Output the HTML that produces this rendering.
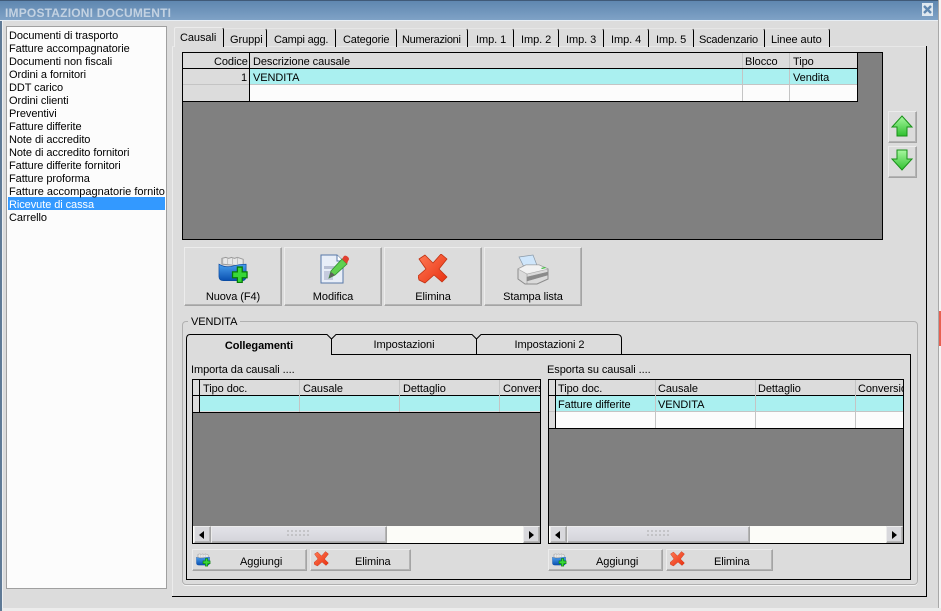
<!DOCTYPE html>
<html><head><meta charset="utf-8"><style>
html,body{margin:0;padding:0;width:941px;height:611px;overflow:hidden;background:#dcdcdc}
body{position:relative;font:11px/13px "Liberation Sans",sans-serif;color:#000}
div{position:absolute;box-sizing:border-box}
.t{white-space:nowrap;line-height:13px;letter-spacing:-.07px;margin-top:1px}
.b{background:#000}
.g{background:#c4c4c4}
.btn{background:#dcdcdc;border:1px solid;border-color:#ececec #a4a4a4 #a4a4a4 #ececec;box-shadow:inset -1px -1px 0 #b4b4b4}
.tab{top:28px;height:19px;border-top:1px solid #e6e6e6;border-right:1px solid #000;border-radius:0 3px 0 0}
.c{text-align:center}
svg{position:absolute;overflow:visible}
</style></head><body>
<svg width="0" height="0" style="position:absolute">
<defs>
<linearGradient id="bl" x1="0" y1="0" x2="0" y2="1"><stop offset="0" stop-color="#4aa0ee"/><stop offset="1" stop-color="#0a50b0"/></linearGradient>
<linearGradient id="gr" x1="0" y1="0" x2="0" y2="1"><stop offset="0" stop-color="#a8f8a0"/><stop offset="1" stop-color="#30c030"/></linearGradient>
<linearGradient id="rd" x1="0" y1="0" x2="1" y2="1"><stop offset="0" stop-color="#ff7a55"/><stop offset="1" stop-color="#e83010"/></linearGradient>
<symbol id="nuova" viewBox="0 0 32 28">
<path d="M4 9V3l4-1 3 1 3-1 3 1 3-1 3 1 3 1v7z" fill="#e8e8e8" stroke="#9a9a9a"/>
<path d="M5 2v7M10 2v7M15 2v7M20 2v7" stroke="#b0b0b0" stroke-width=".7"/>
<path d="M1 9q7 4 14 2t14-2l0 14q-1 3-4 3H6q-5 0-5-4z" fill="url(#bl)" stroke="#0a4aa0" stroke-width=".7"/>
<path d="M20 12h5v5h5v6h-5v5h-5v-5h-5v-6h5z" fill="#38d838" stroke="#087a08" stroke-width="1.3"/>
</symbol>
<symbol id="elim" viewBox="0 0 30 30">
<path d="M1 5l6-4 8 8 8-9 6 5-8 10 8 8-5 5-8-7-9 8-6-3-1-4 8-7z" fill="url(#rd)" stroke="#c03010" stroke-width=".8" stroke-linejoin="round"/>
</symbol>
</defs></svg>

<!-- outer edges -->
<div style="left:938px;top:0;width:3px;height:611px;background:#f4f4f4;border-left:1px solid #a8a8a8"></div>
<div style="left:939px;top:311px;width:2px;height:35px;background:#e86050"></div>
<div style="left:0;top:608px;width:941px;height:3px;background:#ececec"></div>
<div style="left:0;top:21px;width:2px;height:590px;background:#5f7a96"></div>
<div style="left:2px;top:21px;width:1px;height:587px;background:#eef0f2"></div>

<!-- title -->
<div style="left:0;top:0;width:938px;height:21px;background:linear-gradient(#5f87b0,#7fa2c6);border-top:1px solid #405a78;border-bottom:1px solid #e8eef4"></div>
<div class="t" style="left:5px;top:6px;font-weight:bold;font-size:12px;letter-spacing:.2px;color:#c3d2e2">IMPOSTAZIONI DOCUMENTI</div>
<div class="c" style="left:922px;top:3px;width:11px;height:13px;background:#dfe8f0"></div>
<svg style="left:922px;top:4px" width="11" height="11"><path d="M2 2l7 7M9 2l-7 7" stroke="#5f87b0" stroke-width="2.4"/></svg>

<!-- left list -->
<div style="left:6px;top:26px;width:161px;height:563px;background:#fcfcfc;border:1px solid #a0a0a0"></div>
<div style="left:8px;top:197px;width:157px;height:13px;background:#3399ff"></div>
<div class="t" style="left:9px;top:29px">Documenti di trasporto</div>
<div class="t" style="left:9px;top:42px">Fatture accompagnatorie</div>
<div class="t" style="left:9px;top:55px">Documenti non fiscali</div>
<div class="t" style="left:9px;top:68px">Ordini a fornitori</div>
<div class="t" style="left:9px;top:81px">DDT carico</div>
<div class="t" style="left:9px;top:94px">Ordini clienti</div>
<div class="t" style="left:9px;top:107px">Preventivi</div>
<div class="t" style="left:9px;top:120px">Fatture differite</div>
<div class="t" style="left:9px;top:133px">Note di accredito</div>
<div class="t" style="left:9px;top:146px">Note di accredito fornitori</div>
<div class="t" style="left:9px;top:159px">Fatture differite fornitori</div>
<div class="t" style="left:9px;top:172px">Fatture proforma</div>
<div class="t" style="left:9px;width:156px;overflow:hidden;top:185px;letter-spacing:0">Fatture accompagnatorie fornitori</div>
<div class="t" style="left:9px;top:198px;color:#fff">Ricevute di cassa</div>
<div class="t" style="left:9px;top:211px">Carrello</div>

<!-- main page frame -->
<div style="left:172px;top:46px;width:1px;height:551px;background:#ececec"></div>
<div style="left:172px;top:46px;width:755px;height:1px;background:#e8e8e8"></div>
<div class="b" style="left:926px;top:46px;width:1px;height:551px"></div>
<div class="b" style="left:172px;top:596px;width:755px;height:1px"></div>

<!-- top tabs -->
<div style="left:174px;top:27px;width:50px;height:20px;background:#dcdcdc;border-top:1px solid #ececec;border-left:1px solid #ececec;border-right:1px solid #000;border-radius:2px 3px 0 0"></div>
<div class="tab" style="left:224px;width:43px"></div>
<div class="tab" style="left:267px;width:69px"></div>
<div class="tab" style="left:336px;width:61px"></div>
<div class="tab" style="left:397px;width:71px"></div>
<div class="tab" style="left:468px;width:46px"></div>
<div class="tab" style="left:514px;width:45px"></div>
<div class="tab" style="left:559px;width:45px"></div>
<div class="tab" style="left:604px;width:45px"></div>
<div class="tab" style="left:649px;width:45px"></div>
<div class="tab" style="left:694px;width:71px"></div>
<div class="tab" style="left:765px;width:65px"></div>
<div class="t" style="left:180px;top:31px">Causali</div>
<div class="t" style="left:230px;top:33px">Gruppi</div>
<div class="t" style="left:274px;top:33px;letter-spacing:-.2px">Campi agg.</div>
<div class="t" style="left:343px;top:33px;letter-spacing:-.15px">Categorie</div>
<div class="t" style="left:402px;top:33px;letter-spacing:-.28px">Numerazioni</div>
<div class="t" style="left:476px;top:33px">Imp. 1</div>
<div class="t" style="left:521px;top:33px">Imp. 2</div>
<div class="t" style="left:566px;top:33px">Imp. 3</div>
<div class="t" style="left:611px;top:33px">Imp. 4</div>
<div class="t" style="left:656px;top:33px">Imp. 5</div>
<div class="t" style="left:699px;top:33px;letter-spacing:-.2px">Scadenzario</div>
<div class="t" style="left:771px;top:33px">Linee auto</div>

<!-- main grid -->
<div style="left:182px;top:52px;width:701px;height:188px;background:#808080;border:1px solid #000"></div>
<div style="left:183px;top:53px;width:674px;height:48px;background:#dcdcdc"></div>
<div style="left:250px;top:69px;width:607px;height:15px;background:#aaf0f0"></div>
<div style="left:250px;top:85px;width:607px;height:16px;background:#fcfcfc"></div>
<div class="g" style="left:183px;top:84px;width:674px;height:1px"></div>
<div class="g" style="left:742px;top:53px;width:1px;height:48px"></div>
<div class="g" style="left:789px;top:53px;width:1px;height:48px"></div>
<div class="b" style="left:183px;top:68px;width:675px;height:1px"></div>
<div class="b" style="left:183px;top:101px;width:675px;height:1px"></div>
<div class="b" style="left:249px;top:53px;width:1px;height:48px"></div>
<div class="b" style="left:857px;top:53px;width:1px;height:48px"></div>
<div class="t" style="left:214px;top:55px">Codice</div>
<div class="t" style="left:253px;top:55px">Descrizione causale</div>
<div class="t" style="left:745px;top:55px">Blocco</div>
<div class="t" style="left:793px;top:55px">Tipo</div>
<div class="t" style="left:241px;top:71px">1</div>
<div class="t" style="left:253px;top:71px">VENDITA</div>
<div class="t" style="left:793px;top:71px">Vendita</div>

<!-- arrows -->
<div class="btn" style="left:888px;top:111px;width:29px;height:32px"></div>
<div class="btn" style="left:888px;top:146px;width:29px;height:32px"></div>
<svg style="left:892px;top:116px" width="20" height="20"><path d="M10 0L20 11H15V20H5V11H0z" fill="url(#gr)" stroke="#189018"/></svg>
<svg style="left:892px;top:150px" width="20" height="20"><path d="M5 0H15V9H20L10 20L0 9H5z" fill="url(#gr)" stroke="#189018"/></svg>

<!-- action buttons -->
<div class="btn" style="left:184px;top:247px;width:98px;height:59px"></div>
<div class="btn" style="left:284px;top:247px;width:98px;height:59px"></div>
<div class="btn" style="left:384px;top:247px;width:98px;height:59px"></div>
<div class="btn" style="left:484px;top:247px;width:98px;height:59px"></div>
<svg style="left:218px;top:255px" width="31" height="28"><use href="#nuova" width="31" height="28"/></svg>
<svg style="left:320px;top:254px" width="30" height="30">
<path d="M1 1H17L23 7V29H1z" fill="#e8eef8" stroke="#5878a8"/>
<path d="M17 1V7H23" fill="#fff" stroke="#5878a8"/>
<rect x="4" y="12" width="16" height="3" fill="#b8c0d4"/><rect x="4" y="17" width="9" height="9" fill="#c4cade"/>
<path d="M9 24L11 17 22 5 27 10 15 21z" fill="#60d050" stroke="#309030" stroke-width=".8"/>
<path d="M22 5L24 2q2-1 4 1t0 4l-1 3z" fill="#e04030"/>
<path d="M9 24L11 18 15 21z" fill="#606060"/></svg>
<svg style="left:418px;top:254px" width="30" height="30"><use href="#elim" width="30" height="30"/></svg>
<svg style="left:517px;top:254px" width="32" height="30">
<path d="M2 3L16 1 21 14 8 15z" fill="#cfe6fb" stroke="#8898a8" stroke-width=".7"/>
<path d="M1 15L9 11 22 11 31 15 31 25 20 30 8 30 1 25z" fill="#dadada" stroke="#8c8c8c"/>
<path d="M1 15L10 20 31 15 22 11 9 11z" fill="#f2f2f2" stroke="#a8a8a8" stroke-width=".6"/>
<path d="M10 20V30M10 23L31 18V21L10 27z" fill="#8a8a8a" stroke="#8a8a8a" stroke-width=".5"/>
<path d="M24 14l4-1 1 1-4 1z" fill="#40c040"/></svg>
<div class="t c" style="left:184px;width:98px;top:290px">Nuova (F4)</div>
<div class="t c" style="left:284px;width:98px;top:290px">Modifica</div>
<div class="t c" style="left:384px;width:98px;top:290px">Elimina</div>
<div class="t c" style="left:484px;width:98px;top:290px">Stampa lista</div>

<!-- group box -->
<div style="left:182px;top:321px;width:736px;height:264px;border:1px solid #b0b0b0;border-radius:4px;box-shadow:0 1px 0 #f4f4f4"></div>
<div class="t" style="left:188px;top:315px;padding:0 3px;background:#dcdcdc">VENDITA</div>

<!-- inner page -->
<div style="left:186px;top:354px;width:725px;height:226px;border:1px solid #000"></div>
<svg style="left:186px;top:334px" width="437" height="22">
<path d="M145.500 20.500V5L141 .5H4Q.5 .5 .5 5V21" fill="#dcdcdc" stroke="#000"/>
<path d="M145.500 20.500V5L150 .5H286L290.500 5V20.500z" fill="#dcdcdc" stroke="#000"/>
<path d="M290.500 20.500V5L295 .5H431Q435.500 .5 435.500 5V20.500z" fill="#dcdcdc" stroke="#000"/>
<rect x="1" y="20" width="144" height="2" fill="#dcdcdc"/>
</svg>
<div class="t c" style="left:187px;width:144px;top:339px;font-weight:bold">Collegamenti</div>
<div class="t c" style="left:332px;width:144px;top:338px">Impostazioni</div>
<div class="t c" style="left:477px;width:145px;top:338px">Impostazioni 2</div>

<div class="t" style="left:191px;top:363px">Importa da causali ....</div>
<div class="t" style="left:547px;top:363px">Esporta su causali ....</div>

<!-- left subgrid -->
<div style="left:192px;top:379px;width:349px;height:165px;background:#808080;border:1px solid #000;overflow:hidden">
 <div style="left:0;top:0;width:347px;height:32px;background:#dcdcdc"></div>
 <div style="left:7px;top:16px;width:340px;height:15px;background:#aaf0f0"></div>
 <div class="b" style="left:0;top:15px;width:347px;height:1px"></div>
 <div class="b" style="left:0;top:32px;width:347px;height:1px"></div>
 <div class="b" style="left:6px;top:0;width:1px;height:32px"></div>
 <div class="g" style="left:106px;top:0;width:1px;height:32px"></div>
 <div class="g" style="left:206px;top:0;width:1px;height:32px"></div>
 <div class="g" style="left:306px;top:0;width:1px;height:32px"></div>
 <div class="t" style="left:10px;top:2px">Tipo doc.</div>
 <div class="t" style="left:110px;top:2px">Causale</div>
 <div class="t" style="left:210px;top:2px">Dettaglio</div>
 <div class="t" style="left:310px;top:2px">Conversione</div>
 <div style="left:0;top:146px;width:347px;height:17px;background:#fcfcf8"></div>
 <div class="btn" style="left:1px;top:146px;width:17px;height:17px;background:#d8d8dc"></div>
 <div class="btn" style="left:18px;top:146px;width:176px;height:17px;background:linear-gradient(#e2e2e8,#d4d4da)"></div>
 <div class="btn" style="left:330px;top:146px;width:17px;height:17px;background:#d8d8dc"></div>
 <svg style="left:6px;top:151px" width="6" height="8"><path d="M5 0V8L0 4z" fill="#000"/></svg>
 <svg style="left:336px;top:151px" width="6" height="8"><path d="M0 0V8L5 4z" fill="#000"/></svg>
 <svg style="left:94px;top:150px" width="23" height="7"><path d="M0 1h22M0 5h22" stroke="#aaa" stroke-dasharray="2 2"/></svg>
</div>

<!-- right subgrid -->
<div style="left:548px;top:379px;width:356px;height:165px;background:#808080;border:1px solid #000;overflow:hidden">
 <div style="left:0;top:0;width:354px;height:48px;background:#dcdcdc"></div>
 <div style="left:7px;top:16px;width:347px;height:15px;background:#aaf0f0"></div>
 <div style="left:7px;top:32px;width:347px;height:16px;background:#fcfcfc"></div>
 <div class="g" style="left:0;top:31px;width:354px;height:1px"></div>
 <div class="b" style="left:0;top:15px;width:354px;height:1px"></div>
 <div class="b" style="left:0;top:48px;width:354px;height:1px"></div>
 <div class="b" style="left:6px;top:0;width:1px;height:48px"></div>
 <div class="g" style="left:106px;top:0;width:1px;height:48px"></div>
 <div class="g" style="left:206px;top:0;width:1px;height:48px"></div>
 <div class="g" style="left:306px;top:0;width:1px;height:48px"></div>
 <div class="t" style="left:9px;top:2px">Tipo doc.</div>
 <div class="t" style="left:109px;top:2px">Causale</div>
 <div class="t" style="left:209px;top:2px">Dettaglio</div>
 <div class="t" style="left:309px;top:2px">Conversione</div>
 <div class="t" style="left:9px;top:18px">Fatture differite</div>
 <div class="t" style="left:109px;top:18px">VENDITA</div>
 <div style="left:0;top:146px;width:354px;height:17px;background:#fcfcf8"></div>
 <div class="btn" style="left:1px;top:146px;width:17px;height:17px;background:#d8d8dc"></div>
 <div class="btn" style="left:18px;top:146px;width:183px;height:17px;background:linear-gradient(#e2e2e8,#d4d4da)"></div>
 <div class="btn" style="left:337px;top:146px;width:17px;height:17px;background:#d8d8dc"></div>
 <svg style="left:6px;top:151px" width="6" height="8"><path d="M5 0V8L0 4z" fill="#000"/></svg>
 <svg style="left:343px;top:151px" width="6" height="8"><path d="M0 0V8L5 4z" fill="#000"/></svg>
 <svg style="left:98px;top:150px" width="23" height="7"><path d="M0 1h22M0 5h22" stroke="#aaa" stroke-dasharray="2 2"/></svg>
</div>

<!-- small buttons -->
<div class="btn" style="left:192px;top:549px;width:115px;height:22px"></div>
<div class="btn" style="left:310px;top:549px;width:101px;height:22px"></div>
<div class="btn" style="left:548px;top:549px;width:115px;height:22px"></div>
<div class="btn" style="left:666px;top:549px;width:107px;height:22px"></div>
<svg style="left:196px;top:552px" width="15" height="15"><use href="#nuova" width="15" height="15"/></svg>
<svg style="left:314px;top:551px" width="15" height="16"><use href="#elim" width="15" height="16"/></svg>
<svg style="left:552px;top:552px" width="15" height="15"><use href="#nuova" width="15" height="15"/></svg>
<svg style="left:670px;top:551px" width="15" height="16"><use href="#elim" width="15" height="16"/></svg>
<div class="t" style="left:240px;top:555px">Aggiungi</div>
<div class="t" style="left:355px;top:555px">Elimina</div>
<div class="t" style="left:596px;top:555px">Aggiungi</div>
<div class="t" style="left:714px;top:555px">Elimina</div>
</body></html>
